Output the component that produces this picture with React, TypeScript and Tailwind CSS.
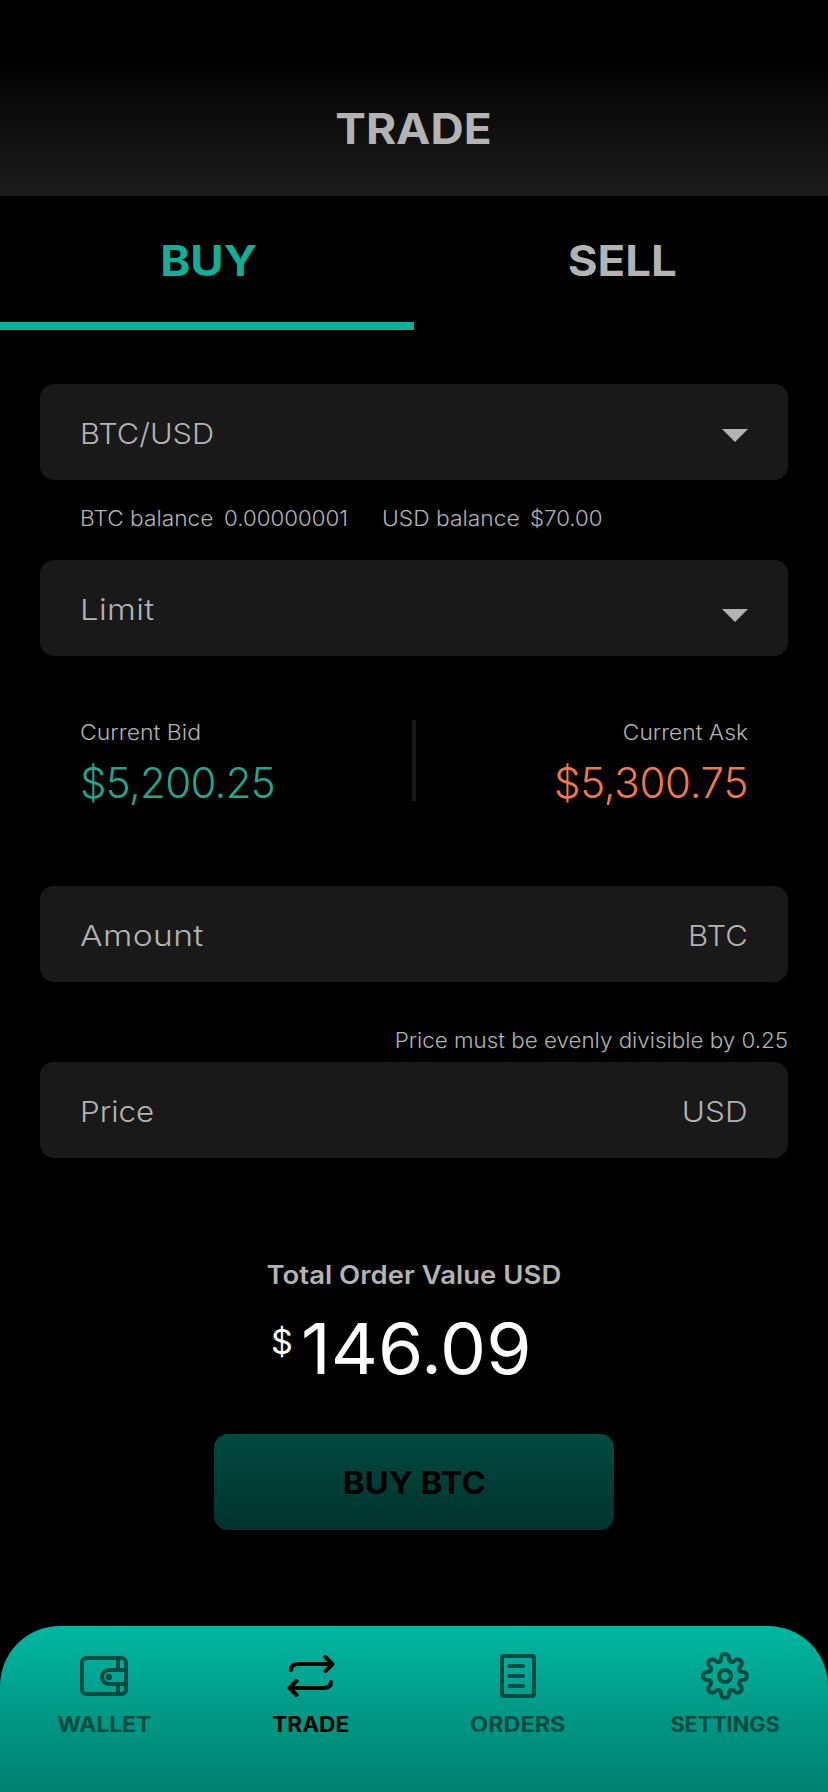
import { ReactNode, useState } from 'react'
import clsx from 'clsx'

const iconProps = {
  width: 48,
  height: 48,
  viewBox: '0 0 48 48',
  fill: 'none',
  stroke: 'currentColor',
  strokeWidth: 4,
  strokeLinecap: 'round' as const,
  strokeLinejoin: 'round' as const,
}

const WalletIcon = () => (
  <svg {...iconProps} strokeLinecap="butt">
    <rect x="2" y="6" width="44" height="36" rx="4.5" />
    <path d="M38 6v12M38 32v10" />
    <path d="M46 18H29a7 7 0 0 0 0 14h17" />
    <circle cx="28.800" cy="25" r="3.200" fill="currentColor" stroke="none" />
  </svg>
)

const TradeIcon = () => (
  <svg {...iconProps}>
    <path d="M4 18c0-4 3-6 8-6h32" />
    <path d="M38.500 5l7 7-7 7" />
    <path d="M44 30c0 4-3 6-8 6H4" />
    <path d="M9.500 29l-7 7 7 7" />
  </svg>
)

const OrdersIcon = () => (
  <svg {...iconProps}>
    <rect x="8" y="4" width="32" height="40" rx="2" />
    <path d="M15.500 14h13.500M15.500 24h13.500M15.500 34h13.500" />
  </svg>
)

// eight rounded teeth, one every 45 degrees
const point = (x: number, y: number, deg: number) => {
  const a = (deg * Math.PI) / 180
  const px = 24 + x * Math.cos(a) - y * Math.sin(a)
  const py = 24 + x * Math.sin(a) + y * Math.cos(a)
  return `${px.toFixed(2)} ${py.toFixed(2)}`
}

const gearPath =
  `M${point(-4, -17, 0)}` +
  [0, 45, 90, 135, 180, 225, 270, 315]
    .map(
      (deg) =>
        `L${point(-4, -18, deg)}A4 4 0 0 1 ${point(4, -18, deg)}` +
        `L${point(4, -17, deg)}A3.04 3.04 0 0 0 ${point(-4, -17, deg + 45)}`
    )
    .join('') +
  'Z'

const SettingsIcon = () => (
  <svg {...iconProps}>
    <path d={gearPath} />
    <circle cx="24" cy="24" r="6" />
  </svg>
)

const Caret = ({ className }: { className?: string }) => (
  <svg width="26" height="13" viewBox="0 0 26 13" className={className}>
    <path d="M0 0h26L13 13z" fill="#b3b3b3" />
  </svg>
)

const Field = ({ children }: { children: ReactNode }) => (
  <div className="flex h-24 w-full items-center justify-between rounded-[14px] bg-[#191919] px-10 pt-[3px] text-[29px] leading-9 font-light">
    {children}
  </div>
)

const navItems = [
  { label: 'WALLET', icon: WalletIcon, stretch: 'scale-x-[1.085]' },
  { label: 'TRADE', icon: TradeIcon, stretch: 'scale-x-[1.08]' },
  { label: 'ORDERS', icon: OrdersIcon, stretch: 'scale-x-[1.115]' },
  { label: 'SETTINGS', icon: SettingsIcon, stretch: 'scale-x-[1.03]' },
]

const App = () => {
  const [side, setSide] = useState('BUY')

  return (
    <div className="flex h-[1792px] w-[828px] flex-col bg-black font-['Inter',sans-serif] text-[#b3b3b3]">
      <header className="flex h-[196px] items-center justify-center bg-linear-to-b/srgb from-black from-28% to-[#1c1c1c] pt-[61px] pr-0.5">
        <h1 className="scale-x-[1.095] text-[42px] leading-none font-bold">TRADE</h1>
      </header>

      <div className="grid h-[134px] grid-cols-2">
        {['BUY', 'SELL'].map((tab) => (
          <button
            key={tab}
            onClick={() => setSide(tab)}
            className={clsx(
              'border-b-8 pt-[3px] pl-[3px] text-[42px] leading-none font-bold',
              side === tab ? 'border-[#08b19b] text-[#11ae98]' : 'border-transparent'
            )}
          >
            <span className="inline-block scale-x-[1.085]">{tab}</span>
          </button>
        ))}
      </div>

      <main className="flex flex-col px-10 pt-[54px]">
        <Field>
          <span className="origin-left scale-x-[1.06]">BTC/USD</span>
          <Caret className="mt-1" />
        </Field>

        <div className="flex h-20 items-center pb-[3px] pl-10 text-[21px] font-light whitespace-pre">
          <span className="w-[144px] origin-left scale-x-[1.08]">BTC balance</span>
          <span className="w-[158px] origin-left scale-x-[1.06]">0.00000001</span>
          <span className="w-[148px] origin-left scale-x-[1.085]">USD balance</span>
          <span className="origin-left scale-x-[1.06]">$70.00</span>
        </div>

        <Field>
          <span className="origin-left scale-x-[1.14] tracking-[0.3px]">Limit</span>
          <Caret className="mt-3" />
        </Field>

        <div className="mt-16 flex h-[88px] justify-between px-10">
          <div className="w-[280px]">
            <p className="origin-left scale-x-[1.095] text-[21px] leading-[25px] font-light">Current Bid</p>
            <p className="mt-3 text-[42px] leading-[51px] font-[350] tracking-[-0.7px] text-[#22a78f]">$5,200.25</p>
          </div>
          <div className="h-[81px] w-1 bg-[#191919]" />
          <div className="w-[280px] text-right">
            <p className="origin-right scale-x-[1.085] text-[21px] leading-[25px] font-light">Current Ask</p>
            <p className="mt-3 text-[42px] leading-[51px] font-[350] tracking-[-0.3px] text-[#f2784b]">$5,300.75</p>
          </div>
        </div>

        <div className="mt-[78px]">
          <Field>
            <span className="origin-left scale-x-[1.16] tracking-[0.3px]">Amount</span>
            <span className="origin-right scale-x-[1.07]">BTC</span>
          </Field>
        </div>

        <p className="mt-11 mb-[7px] origin-right scale-x-[1.065] text-right text-[21px] leading-[29px] font-light">
          Price must be evenly divisible by 0.25
        </p>
        <Field>
          <span className="origin-left scale-x-[1.08]">Price</span>
          <span className="origin-right scale-x-[1.085]">USD</span>
        </Field>

        <div className="mt-[101px] flex flex-col items-center">
          <p className="scale-x-[1.1] text-[25px] leading-8 font-semibold">Total Order Value USD</p>
          <div className="mt-[18px] flex w-[286px] text-white">
            <span className="w-[30px] text-[34px] leading-[65px]">$</span>
            <span className="origin-left scale-x-[1.045] text-[70px] leading-[80px]">146.09</span>
          </div>
          <button className="mt-[45px] h-24 w-[400px] rounded-[14px] bg-linear-to-b/srgb from-[#004a40] to-[#00332c] pt-px text-[31px] leading-none font-bold text-black">
            <span className="inline-block scale-x-[1.065]">BUY BTC</span>
          </button>
        </div>
      </main>

      <nav className="mt-auto grid h-[166px] grid-cols-4 rounded-t-[60px] bg-linear-to-b/srgb from-[#00b7a1] to-[#007f6e] pt-[26px] pl-px text-[#004a41]">
        {navItems.map(({ label, icon: Icon, stretch }) => (
          <a key={label} className={clsx('flex flex-col items-center', label === 'TRADE' && 'text-black')}>
            <Icon />
            <span className={clsx('mt-[13px] text-[21px] leading-6 font-bold', stretch)}>{label}</span>
          </a>
        ))}
      </nav>
    </div>
  )
}

export default App
